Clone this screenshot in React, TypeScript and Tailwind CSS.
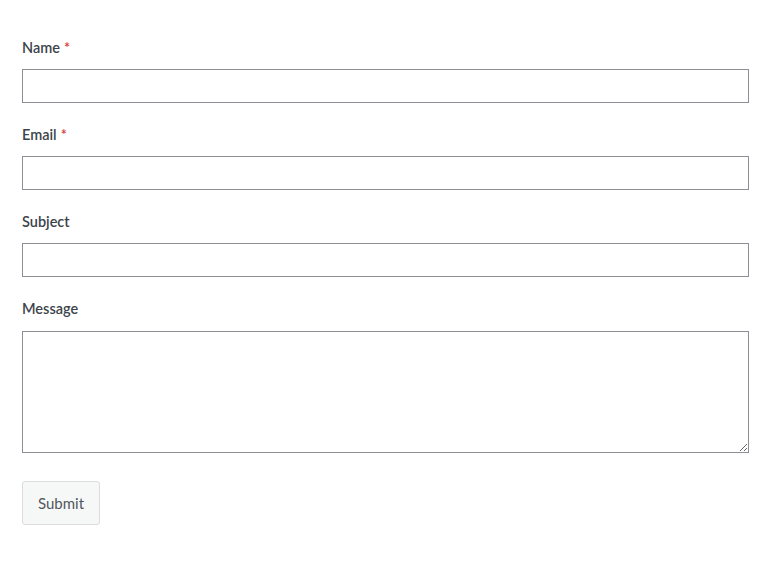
import React from 'react';

const fieldClass = 'block w-full h-[34px] border border-[#8c8f94] bg-white px-2 text-[14px] text-[#2c3338] outline-none';

const Label = ({ text, required, gap = 'mb-[11px]' }: { text: string; required?: boolean; gap?: string }) => (
  <label className={`block h-5 leading-5 ${gap} text-[14.5px] font-semibold text-[#3c434a]`}>
    {text}
    {required && <span className="text-[#d63638] ml-1">*</span>}
  </label>
);

export default function App() {
  return (
    <div className="min-h-screen bg-white pl-[22px] pr-[21px] pt-[38px]" style={{ fontFamily: '"Lato", "Open Sans", sans-serif' }}>
      <form className="w-full">
        <div className="mb-[22px]">
          <Label text="Name" required />
          <input type="text" className={fieldClass} />
        </div>
        <div className="mb-[22px]">
          <Label text="Email" required />
          <input type="email" className={fieldClass} />
        </div>
        <div className="mb-[22px]">
          <Label text="Subject" />
          <input type="text" className={fieldClass} />
        </div>
        <div className="mb-[28px]">
          <Label text="Message" gap="mb-3" />
          <textarea className="block w-full h-[122px] border border-[#8c8f94] bg-white px-2 py-1 text-[14px] text-[#2c3338] outline-none" />
        </div>
        <button
          type="button"
          className="w-[78px] h-[44px] rounded-[3px] border border-[#dcdcde] bg-[#f6f7f7] text-[15px] text-[#50575e]"
        >
          Submit
        </button>
      </form>
    </div>
  );
}
